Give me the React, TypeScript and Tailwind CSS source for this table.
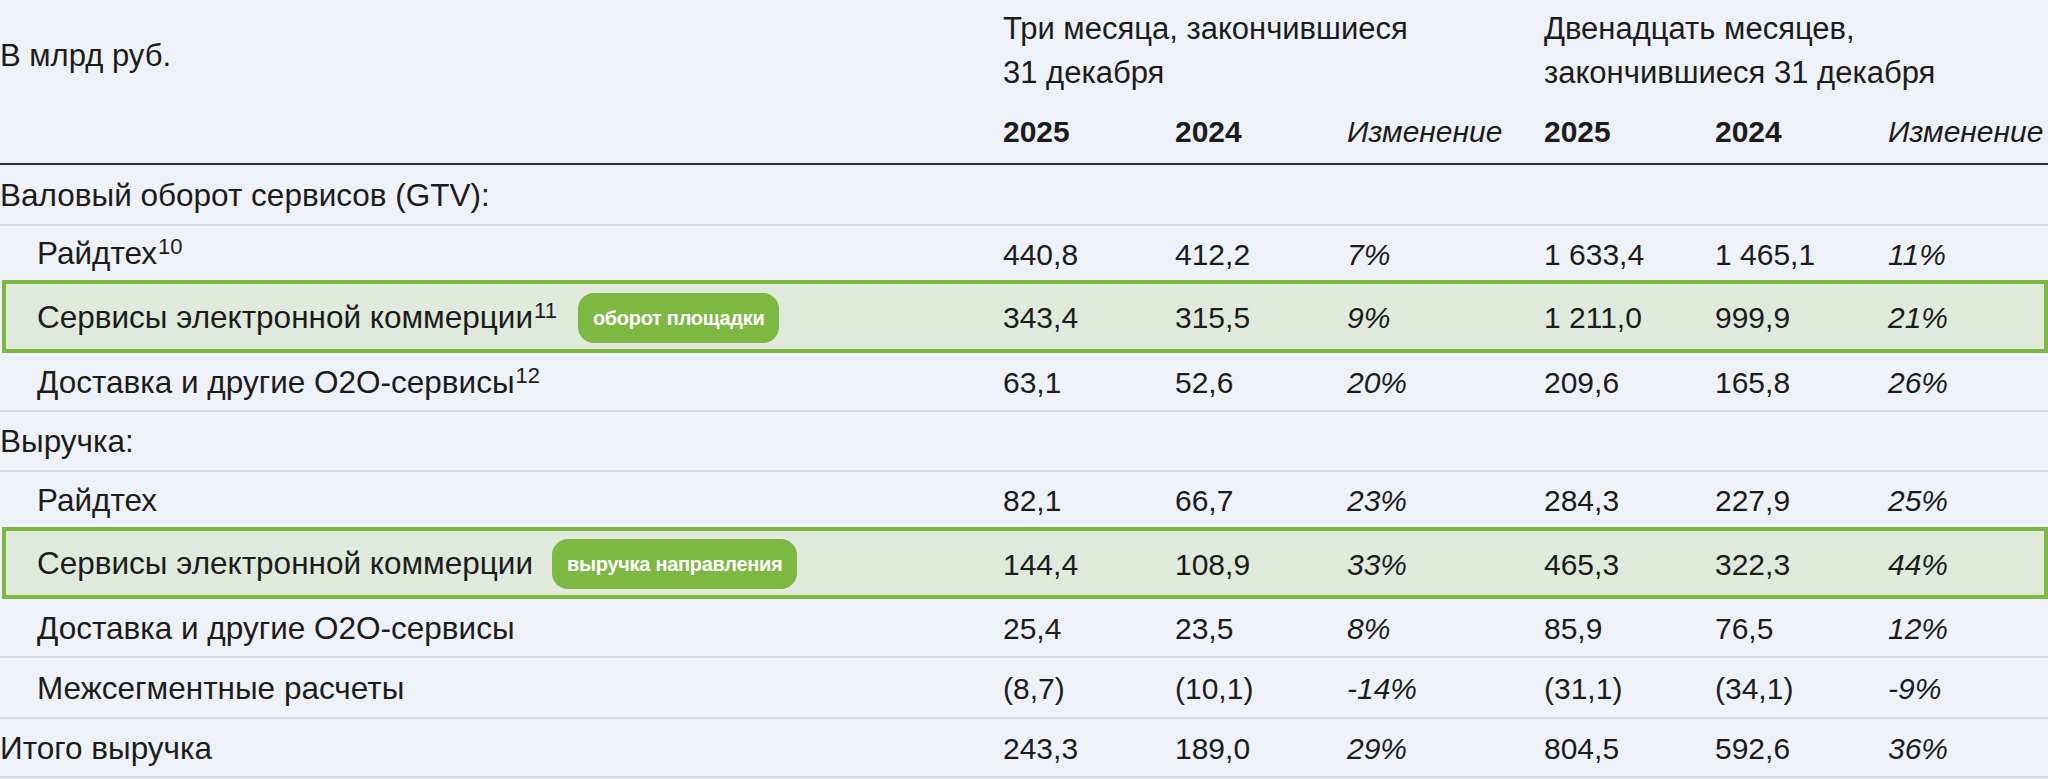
import React from "react";

type Row = {
  label: string;
  sup?: string;
  indent?: boolean;
  badge?: string;
  values?: string[];
  h: string;
  line?: boolean;
  box?: boolean;
};

// Rows of the table, top to bottom
const rows: Row[] = [
  { label: "Валовый оборот сервисов (GTV):", h: "h-[61px]", line: true },
  {
    label: "Райдтех",
    sup: "10",
    indent: true,
    values: ["440,8", "412,2", "7%", "1\u00a0633,4", "1\u00a0465,1", "11%"],
    h: "h-[54px]",
  },
  {
    label: "Сервисы электронной коммерции",
    sup: "11",
    indent: true,
    badge: "оборот площадки",
    values: ["343,4", "315,5", "9%", "1\u00a0211,0", "999,9", "21%"],
    h: "h-[73px]",
    box: true,
  },
  {
    label: "Доставка и другие O2O-сервисы",
    sup: "12",
    indent: true,
    values: ["63,1", "52,6", "20%", "209,6", "165,8", "26%"],
    h: "h-[59px]",
    line: true,
  },
  { label: "Выручка:", h: "h-[60px]", line: true },
  {
    label: "Райдтех",
    indent: true,
    values: ["82,1", "66,7", "23%", "284,3", "227,9", "25%"],
    h: "h-[55px]",
  },
  {
    label: "Сервисы электронной коммерции",
    indent: true,
    badge: "выручка направления",
    values: ["144,4", "108,9", "33%", "465,3", "322,3", "44%"],
    h: "h-[72px]",
    box: true,
  },
  {
    label: "Доставка и другие O2O-сервисы",
    indent: true,
    values: ["25,4", "23,5", "8%", "85,9", "76,5", "12%"],
    h: "h-[59px]",
    line: true,
  },
  {
    label: "Межсегментные расчеты",
    indent: true,
    values: ["(8,7)", "(10,1)", "-14%", "(31,1)", "(34,1)", "-9%"],
    h: "h-[61px]",
    line: true,
  },
  {
    label: "Итого выручка",
    values: ["243,3", "189,0", "29%", "804,5", "592,6", "36%"],
    h: "h-[59px]",
    line: true,
  },
];

const TableRow = ({ row }: { row: Row }) => {
  const grid = row.box
    ? "ml-[2px] border-4 border-[#7cb842] bg-[#dfe9dc] grid-cols-[997px_172px_172px_197px_171px_173px_1fr]"
    : "grid-cols-[1003px_172px_172px_197px_171px_173px_1fr]";
  const pad = row.box ? "pl-[31px]" : row.indent ? "pl-[37px]" : "pl-0";

  return (
    <div
      className={`grid items-center pt-[2px] ${grid} ${row.h} ${
        row.line ? "border-b-2 border-[#d6d9df]" : ""
      }`}
    >
      <div className={`flex items-center whitespace-nowrap text-[31.5px] ${pad}`}>
        <span>
          {row.label}
          {row.sup && (
            <sup className="text-[22px] relative -top-[10px] ml-[1px]">{row.sup}</sup>
          )}
        </span>
        {row.badge && (
          <span
            className={`${row.sup ? "ml-[21px]" : "ml-[19px]"} h-[50px] px-[15px] flex items-center rounded-[16px] bg-[#7cb842] text-white text-[20px] font-bold tracking-[-0.3px]`}
          >
            {row.badge}
          </span>
        )}
      </div>
      {(row.values ?? ["", "", "", "", "", ""]).map((v, i) => (
        <div
          key={i}
          className={`whitespace-nowrap text-[30px] ${i === 2 || i === 5 ? "italic" : ""}`}
        >
          {v}
        </div>
      ))}
    </div>
  );
};

export default function App() {
  return (
    <div className="w-full min-h-screen overflow-hidden bg-[#eef1f8] text-[#1c1c1c] font-['Liberation_Sans',Arial,sans-serif]">
      {/* Header */}
      <div className="grid grid-cols-[1003px_172px_172px_197px_171px_173px_1fr] pt-[7px] pb-[9px] border-b-2 border-[#2b2b2b] leading-[44px]">
        <div className="row-span-2 pt-[27px] text-[31px] whitespace-nowrap">В млрд руб.</div>
        <div className="col-span-3 text-[31px] whitespace-nowrap">
          Три месяца, закончившиеся
          <br />
          31 декабря
        </div>
        <div className="col-span-3 text-[31px] whitespace-nowrap">
          Двенадцать месяцев,
          <br />
          закончившиеся 31 декабря
        </div>
        <div className="mt-[15px] text-[30px] font-bold">2025</div>
        <div className="mt-[15px] text-[30px] font-bold">2024</div>
        <div className="mt-[15px] text-[30px] italic whitespace-nowrap">Изменение</div>
        <div className="mt-[15px] text-[30px] font-bold">2025</div>
        <div className="mt-[15px] text-[30px] font-bold">2024</div>
        <div className="mt-[15px] text-[30px] italic whitespace-nowrap">Изменение</div>
      </div>

      {/* Body */}
      <div className="flex flex-col">
        {rows.map((r, i) => (
          <TableRow key={i} row={r} />
        ))}
      </div>
    </div>
  );
}
